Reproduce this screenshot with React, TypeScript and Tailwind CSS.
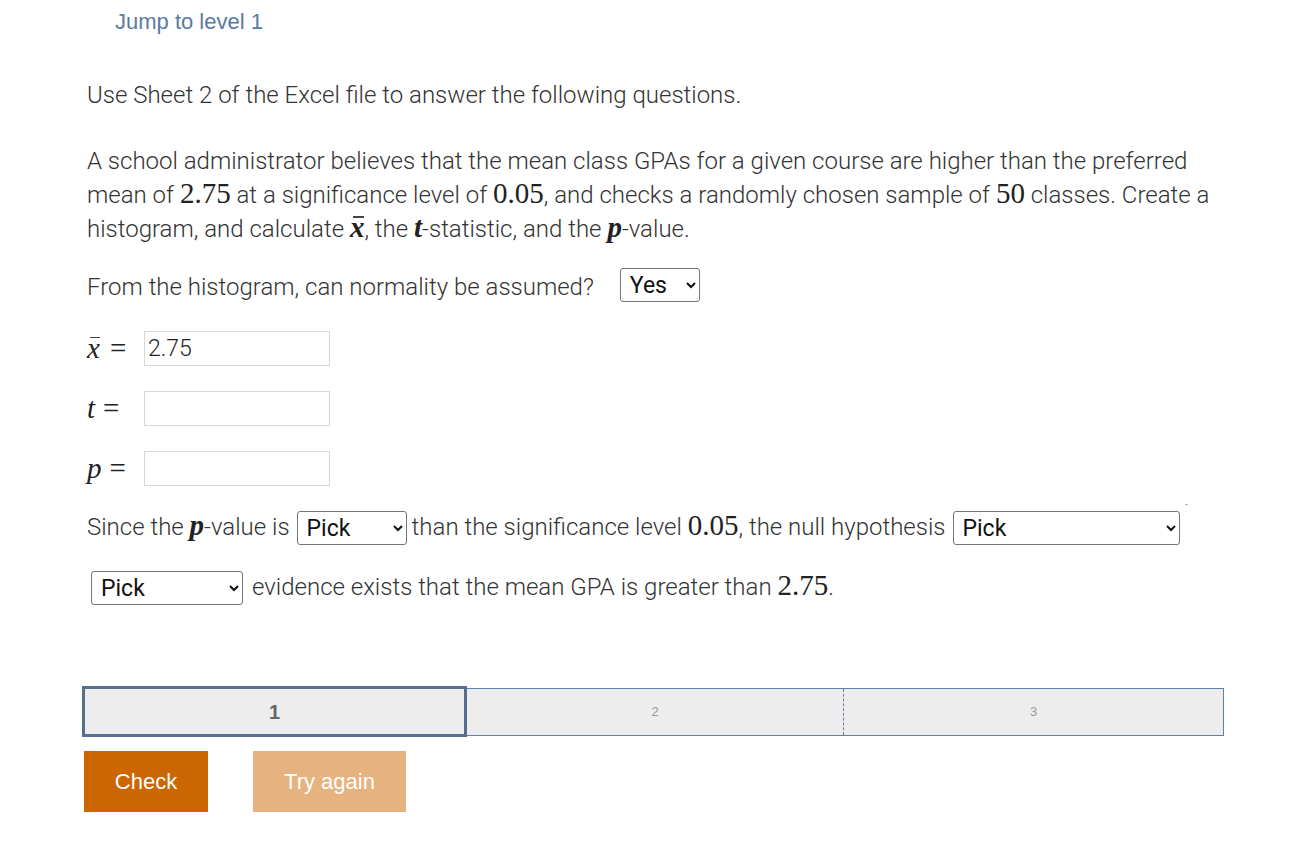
import React from "react";

const math = { fontFamily: '"Liberation Serif", "DejaVu Serif", serif' };

function M({ children, bold = false, italic = false }: { children: React.ReactNode; bold?: boolean; italic?: boolean }) {
  return (
    <span
      style={math}
      className={`text-[29px] leading-none ${bold ? "font-bold" : "font-normal"} ${italic ? "italic" : ""} text-[#222]`}
    >
      {children}
    </span>
  );
}

function XBar({ bold = false }: { bold?: boolean }) {
  return (
    <span style={math} className={`inline-block relative text-[29px] leading-none italic ${bold ? "font-bold" : ""} text-[#222]`}>
      <span className="absolute left-[3px] right-0 top-[3px] h-[1.5px] bg-[#444]" />
      x
    </span>
  );
}

function Sel({ value, w }: { value: string; w: string }) {
  return (
    <select
      defaultValue={value}
      className={`${w} h-[34px] border border-[#767676] rounded-[3px] bg-white pl-[5px] text-[23px] font-normal text-[#111] align-middle`}
    >
      <option>{value}</option>
    </select>
  );
}

function Field({ label, value }: { label: React.ReactNode; value?: string }) {
  return (
    <div className="flex items-center h-[34px]">
      <div className="w-[57px] flex items-center">{label}</div>
      <input
        defaultValue={value}
        className="w-[186px] h-[35px] border border-[#d4d7dc] px-[3px] text-[23px] font-light text-[#222]"
      />
    </div>
  );
}

export default function App() {
  return (
    <div
      className="min-h-[851px] bg-white text-[#333] font-light text-[24px]"
      style={{ fontFamily: 'Roboto, "Noto Sans", sans-serif' }}
    >
      <div className="pl-[87px] w-[1230px]">
        <div
          className="pl-[28px] pt-[7px] text-[22px] font-normal text-[#5a7aa5] leading-[30px]"
          style={{ fontFamily: '"Liberation Sans", Arial, sans-serif' }}
        >
          Jump to level 1
        </div>

        <p className="mt-[41px] leading-[34px]">Use Sheet 2 of the Excel file to answer the following questions.</p>

        <p className="mt-[32px] leading-[34px] w-[1135px]">
          A school administrator believes that the mean class GPAs for a given course are higher than the preferred mean of{" "}
          <M>2.75</M> at a significance level of <M>0.05</M>, and checks a randomly chosen sample of <M>50</M> classes.
          Create a histogram, and calculate <XBar bold />, the <M bold italic>t</M>-statistic, and the{" "}
          <M bold italic>p</M>-value.
        </p>

        <div className="mt-[24px] flex items-center h-[34px]">
          <span>From the histogram, can normality be assumed?</span>
          <span className="ml-[26px] relative top-[-3px]">
            <Sel value="Yes" w="w-[80px]" />
          </span>
        </div>

        <div className="mt-[27px] flex flex-col gap-[26px]">
          <Field
            label={
              <span className="flex items-center gap-[10px]">
                <XBar /> <M>=</M>
              </span>
            }
            value="2.75"
          />
          <Field
            label={
              <span className="flex items-center gap-[8px]">
                <M italic>t</M> <M>=</M>
              </span>
            }
          />
          <Field
            label={
              <span className="flex items-center gap-[8px]">
                <M italic>p</M> <M>=</M>
              </span>
            }
          />
        </div>

        <div className="mt-[25px] flex items-center h-[34px] relative">
          <span>
            Since the <M bold italic>p</M>-value is
          </span>
          <span className="ml-[7px] mr-[5px]">
            <Sel value="Pick" w="w-[110px]" />
          </span>
          <span>
            than the significance level <M>0.05</M>, the null hypothesis
          </span>
          <span className="ml-[7px]">
            <Sel value="Pick" w="w-[227px]" />
          </span>
          <span className="absolute left-[1098px] top-[-20px] text-[#333] text-[14px]">.</span>
        </div>

        <div className="mt-[26px] flex items-center h-[34px]">
          <span className="ml-[4px] mr-[9px]">
            <Sel value="Pick" w="w-[152px]" />
          </span>
          <span>
            evidence exists that the mean GPA is greater than <M>2.75</M>.
          </span>
        </div>
      </div>

      <div
        className="ml-[82px] mt-[82px] w-[1142px] flex items-center"
        style={{ fontFamily: '"Liberation Sans", Arial, sans-serif' }}
      >
        <div className="w-[385px] h-[51px] border-[3px] border-[#566f91] bg-[#ededed] flex items-center justify-center text-[20px] font-bold text-[#666]">
          1
        </div>
        <div className="flex-1 h-[48px] border border-l-0 border-[#5b82aa] bg-[#ededed] flex">
          <div className="w-[377px] border-r border-dashed border-[#5b82aa] flex items-center justify-center text-[13px] font-normal text-[#999]">
            2
          </div>
          <div className="flex-1 flex items-center justify-center text-[13px] font-normal text-[#999]">3</div>
        </div>
      </div>

      <div
        className="ml-[84px] mt-[14px] flex gap-[45px]"
        style={{ fontFamily: '"Liberation Sans", Arial, sans-serif' }}
      >
        <button className="w-[124px] h-[61px] bg-[#cc6600] text-white text-[22px] font-normal">Check</button>
        <button className="w-[153px] h-[61px] bg-[#e6b27f] text-white text-[22px] font-normal">Try again</button>
      </div>
    </div>
  );
}
